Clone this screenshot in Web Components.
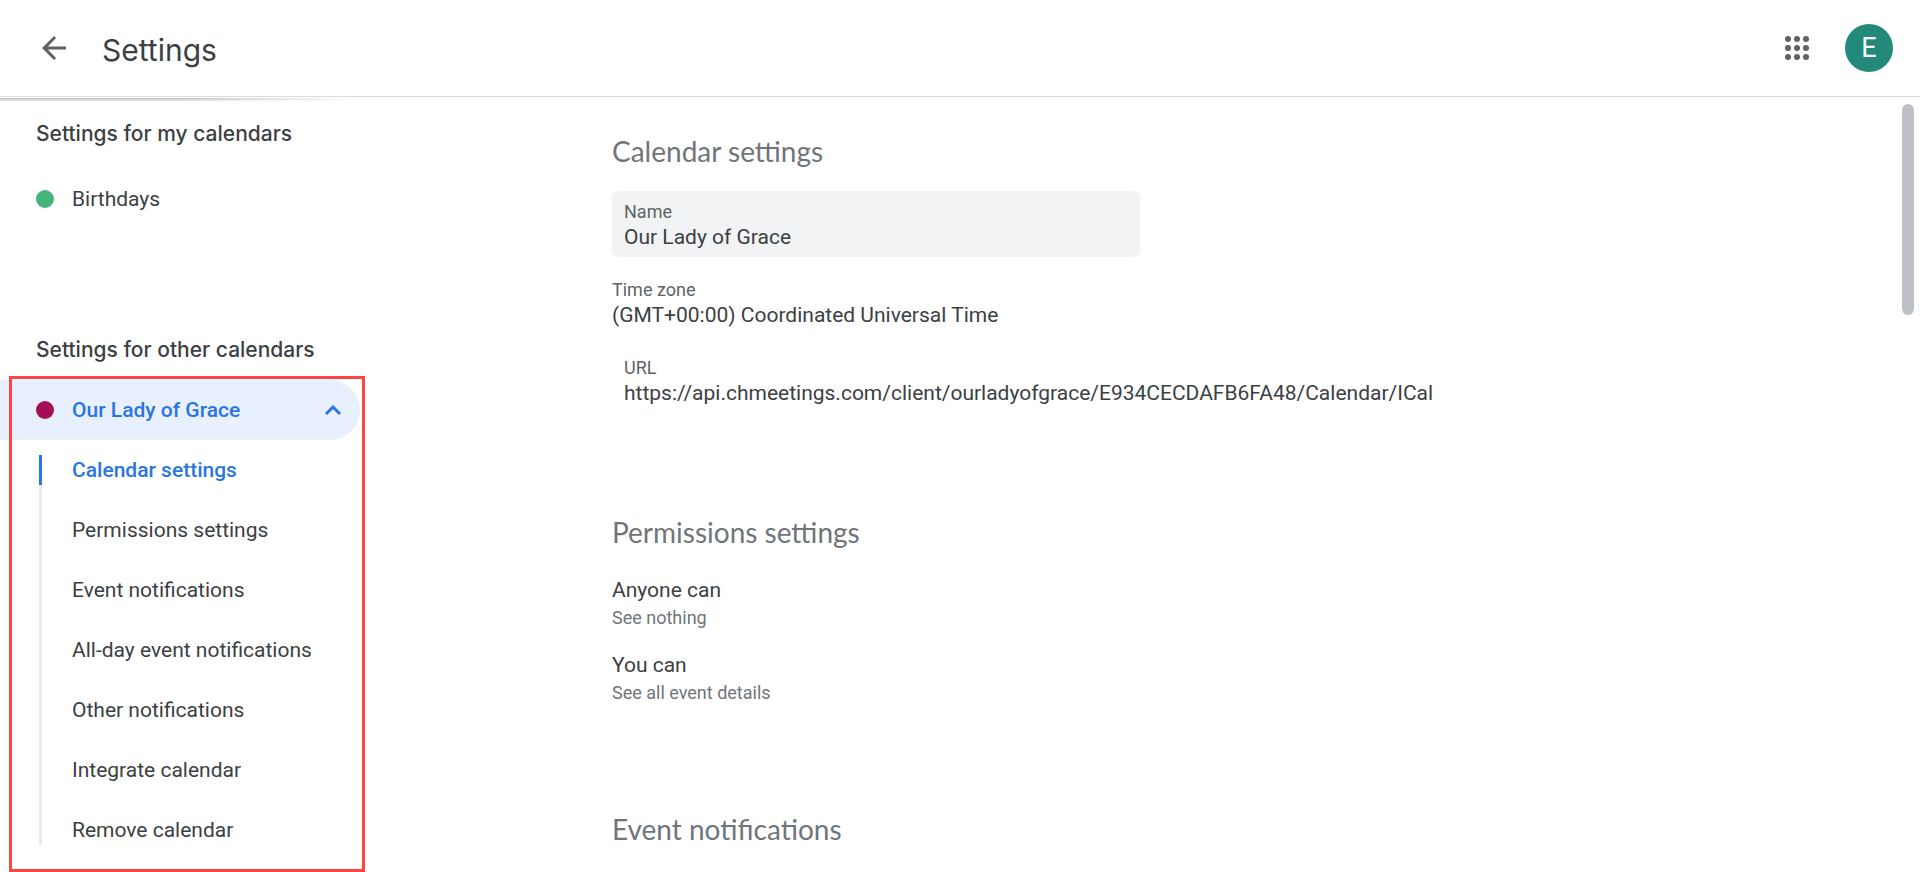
<!DOCTYPE html>
<html lang="en">
<head>
<meta charset="utf-8">
<title>Settings</title>
<style>
  html, body {
    height: 100%;
    margin: 0;
  }

  body {
    overflow: hidden;
    background: #fff;
    color: #3c4043;
    font: 400 21px/24px Roboto, "Liberation Sans", sans-serif;
    --title-font: Inter, "Open Sans", sans-serif;
    --section-font: Lato, "Open Sans", sans-serif;
    --blue: #2a75e4;
    --grey: #70757a;
    --line: #dadce0;
  }
</style>
</head>
<body>
<settings-app></settings-app>

<template id="settings-app">
  <style>
    :host {
      display: flex;
      flex-direction: column;
      height: 100%;
    }
    .body {
      flex: 1;
      min-height: 0;
      display: grid;
      grid-template-columns: 372px 1fr auto;
    }
    nav {
      position: relative;
    }
    /* scroll shadow under the header, it fades to the right */
    nav::before {
      content: "";
      position: absolute;
      top: 1px;
      left: 0;
      width: 360px;
      height: 3px;
      background: linear-gradient(#bdbdbd, #e8e8e8);
      -webkit-mask-image: linear-gradient(to right, #000 50%, transparent);
      mask-image: linear-gradient(to right, #000 50%, transparent);
    }
    main {
      min-width: 0;
      overflow: hidden;
      padding: 36px 24px 0 240px;
    }
    .scrollbar {
      padding: 7px 6px;
    }
    .thumb {
      width: 12px;
      height: 211px;
      border-radius: 6px;
      background: #bdc1c6;
    }
  </style>
  <app-header title="Settings" user="E"></app-header>
  <div class="body">
    <nav aria-label="Calendars">
      <nav-group heading="Settings for my calendars">
        <calendar-item color="#45b57c">Birthdays</calendar-item>
      </nav-group>
      <nav-group heading="Settings for other calendars">
        <calendar-item color="#a50e56" open>Our Lady of Grace
          <sub-item slot="items" active>Calendar settings</sub-item>
          <sub-item slot="items">Permissions settings</sub-item>
          <sub-item slot="items">Event notifications</sub-item>
          <sub-item slot="items">All-day event notifications</sub-item>
          <sub-item slot="items">Other notifications</sub-item>
          <sub-item slot="items">Integrate calendar</sub-item>
          <sub-item slot="items">Remove calendar</sub-item>
        </calendar-item>
      </nav-group>
    </nav>
    <main>
      <settings-section heading="Calendar settings">
        <text-field label="Name" value="Our Lady of Grace" filled></text-field>
        <info-field label="Time zone">(GMT+00:00) Coordinated Universal Time</info-field>
        <text-field label="URL" value="https://api.chmeetings.com/client/ourladyofgrace/E934CECDAFB6FA48/Calendar/ICal"></text-field>
      </settings-section>
      <settings-section heading="Permissions settings">
        <permission-row who="Anyone can">See nothing</permission-row>
        <permission-row who="You can">See all event details</permission-row>
      </settings-section>
      <settings-section heading="Event notifications"></settings-section>
    </main>
    <div class="scrollbar"><div class="thumb"></div></div>
  </div>
</template>

<template id="app-header">
  <style>
    :host {
      display: flex;
      align-items: center;
      height: 96px;
      padding: 0 27px 0 36px;
      border-bottom: 1px solid var(--line);
    }
    h1 {
      flex: 1;
      margin: 0 0 0 30px;
      padding-top: 4px;
      font: 400 30px/36px var(--title-font);
    }
    button {
      display: block;
      padding: 0;
      border: 0;
      background: none;
      color: #5f6368;
      font-family: inherit;
      cursor: pointer;
    }
    svg {
      display: block;
      width: 36px;
      height: 36px;
    }
    .avatar {
      width: 48px;
      height: 48px;
      margin-left: 30px;
      border-radius: 50%;
      background: #22897b;
      color: #fff;
      font-size: 27px;
      line-height: 48px;
    }
  </style>
  <button class="back" aria-label="Back">
    <svg viewBox="0 0 24 24" fill="currentColor"><path d="M20 11H7.83l5.59-5.59L12 4l-8 8 8 8 1.41-1.41L7.83 13H20v-2z"/></svg>
  </button>
  <h1></h1>
  <button aria-label="Apps">
    <svg viewBox="0 0 24 24" fill="currentColor">
      <circle cx="6" cy="6" r="2"/><circle cx="12" cy="6" r="2"/><circle cx="18" cy="6" r="2"/>
      <circle cx="6" cy="12" r="2"/><circle cx="12" cy="12" r="2"/><circle cx="18" cy="12" r="2"/>
      <circle cx="6" cy="18" r="2"/><circle cx="12" cy="18" r="2"/><circle cx="18" cy="18" r="2"/>
    </svg>
  </button>
  <button class="avatar" aria-label="Account"></button>
</template>

<template id="nav-group">
  <style>
    :host {
      display: block;
      padding-top: 22px;
      margin-bottom: 84px;
    }
    :host(:last-of-type) {
      margin-bottom: 0;
    }
    h2 {
      margin: 0 0 20px;
      padding-left: 36px;
      font: 500 21px/30px var(--title-font);
    }
    :host(:last-of-type) h2 {
      margin-bottom: 15px;
    }
  </style>
  <h2></h2>
  <slot></slot>
</template>

<template id="calendar-item">
  <style>
    :host {
      display: block;
      position: relative;
    }
    button {
      display: flex;
      align-items: center;
      width: 360px;
      height: 60px;
      padding: 0 15px 0 36px;
      border: 0;
      border-radius: 0 30px 30px 0;
      background: none;
      color: inherit;
      font: inherit;
      text-align: left;
      cursor: pointer;
    }
    .dot {
      width: 18px;
      height: 18px;
      margin-right: 18px;
      border-radius: 50%;
    }
    .name {
      flex: 1;
    }
    svg {
      display: none;
      width: 24px;
      height: 24px;
    }
    ul {
      display: none;
      margin: 0;
      padding: 0;
      list-style: none;
    }
    :host([open]) button {
      background: #e8f0fe;
      color: var(--blue);
      font-weight: 500;
    }
    :host([open]) svg,
    :host([open]) ul {
      display: block;
    }
    /* grey rail next to the sub items */
    :host([open]) ul::before {
      content: "";
      position: absolute;
      top: 75px;
      bottom: 15px;
      left: 39px;
      width: 3px;
      background: #e8eaed;
    }
    /* red frame around the open calendar */
    :host([open])::after {
      content: "";
      position: absolute;
      top: -4px;
      bottom: -12px;
      left: 9px;
      width: 350px;
      border: 3px solid #ff4444;
      pointer-events: none;
    }
  </style>
  <button>
    <span class="dot"></span>
    <span class="name"><slot></slot></span>
    <svg viewBox="0 0 24 24" fill="none" stroke="currentColor" stroke-width="3"><path d="M5 16l7-7 7 7"/></svg>
  </button>
  <ul><slot name="items"></slot></ul>
</template>

<template id="sub-item">
  <style>
    :host {
      display: block;
      position: relative;
    }
    a {
      display: block;
      padding-left: 72px;
      color: inherit;
      line-height: 60px;
      text-decoration: none;
    }
    :host([active]) a {
      color: var(--blue);
      font-weight: 500;
    }
    :host([active])::before {
      content: "";
      position: absolute;
      top: 15px;
      bottom: 15px;
      left: 39px;
      width: 3px;
      background: var(--blue);
    }
  </style>
  <a href="#"><slot></slot></a>
</template>

<template id="settings-section">
  <style>
    :host {
      display: block;
      margin-bottom: 101px;
    }
    :host(:last-of-type) {
      margin-bottom: 0;
    }
    h2 {
      margin: 0;
      color: var(--grey);
      font: 400 28px/36px var(--section-font);
    }
    .content {
      display: flex;
      flex-direction: column;
      gap: 12px;
    }
    ::slotted(:first-child) {
      margin-top: 22px;
    }
  </style>
  <h2></h2>
  <div class="content"><slot></slot></div>
</template>

<template id="text-field">
  <style>
    :host {
      display: block;
      padding: 8px 12px;
      border-radius: 6px;
    }
    :host([filled]) {
      max-width: 504px;
      background: #f1f3f4;
    }
    label {
      display: block;
      color: #5f6368;
      font-size: 18px;
      line-height: 26px;
    }
    input {
      display: block;
      box-sizing: border-box;
      width: 100%;
      height: 24px;
      padding: 0;
      border: 0;
      outline: 0;
      background: none;
      color: inherit;
      font: inherit;
    }
  </style>
  <label for="field"></label>
  <input id="field" type="text" readonly>
</template>

<template id="info-field">
  <style>
    :host {
      display: block;
      padding: 8px 0;
    }
    .label {
      color: #5f6368;
      font-size: 18px;
      line-height: 26px;
    }
  </style>
  <div class="label"></div>
  <div><slot></slot></div>
</template>

<template id="permission-row">
  <style>
    :host {
      display: block;
      padding: 3px 0 4px;
    }
    .who {
      line-height: 30px;
    }
    .access {
      color: var(--grey);
      font-size: 18px;
      line-height: 26px;
    }
  </style>
  <div class="who"></div>
  <div class="access"><slot></slot></div>
</template>

<script>
class BaseElement extends HTMLElement {
  constructor() {
    super();
    this.attachShadow({ mode: "open" });
  }

  connectedCallback() {
    const template = document.getElementById(this.localName);
    this.shadowRoot.replaceChildren(template.content.cloneNode(true));
    this.render();
  }

  // puts the value of an attribute in an element of the template
  setText(selector, attribute) {
    this.shadowRoot.querySelector(selector).textContent = this.getAttribute(attribute);
  }

  render() {}
}

class SettingsApp extends BaseElement {}

class AppHeader extends BaseElement {
  render() {
    this.setText("h1", "title");
    this.setText(".avatar", "user");
  }
}

class NavGroup extends BaseElement {
  render() {
    this.setText("h2", "heading");
  }
}

class CalendarItem extends BaseElement {
  render() {
    this.shadowRoot.querySelector(".dot").style.background = this.getAttribute("color");

    const button = this.shadowRoot.querySelector("button");
    button.addEventListener("click", () => {
      // only calendars with sub items can be opened
      if (this.querySelector("sub-item")) this.toggleAttribute("open");
    });
  }
}

class SubItem extends BaseElement {
  render() {
    this.setAttribute("role", "listitem");
    this.shadowRoot.querySelector("a").addEventListener("click", (event) => {
      event.preventDefault();
      this.parentElement.querySelectorAll("sub-item").forEach(item => {
        item.toggleAttribute("active", item === this);
      });
    });
  }
}

class SettingsSection extends BaseElement {
  render() {
    this.setText("h2", "heading");
  }
}

class TextField extends BaseElement {
  render() {
    this.setText("label", "label");
    this.shadowRoot.querySelector("input").value = this.getAttribute("value");
  }
}

class InfoField extends BaseElement {
  render() {
    this.setText(".label", "label");
  }
}

class PermissionRow extends BaseElement {
  render() {
    this.setText(".who", "who");
  }
}

customElements.define("app-header", AppHeader);
customElements.define("nav-group", NavGroup);
customElements.define("calendar-item", CalendarItem);
customElements.define("sub-item", SubItem);
customElements.define("settings-section", SettingsSection);
customElements.define("text-field", TextField);
customElements.define("info-field", InfoField);
customElements.define("permission-row", PermissionRow);
customElements.define("settings-app", SettingsApp);
</script>
</body>
</html>
